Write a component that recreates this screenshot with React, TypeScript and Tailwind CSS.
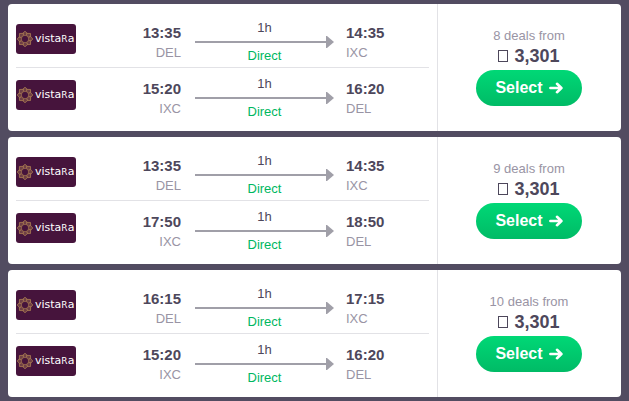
type Leg = { depart: string; from: string; arrive: string; to: string };
type Deal = { count: number; legs: Leg[] };

const deals: Deal[] = [
  {
    count: 8,
    legs: [
      { depart: "13:35", from: "DEL", arrive: "14:35", to: "IXC" },
      { depart: "15:20", from: "IXC", arrive: "16:20", to: "DEL" },
    ],
  },
  {
    count: 9,
    legs: [
      { depart: "13:35", from: "DEL", arrive: "14:35", to: "IXC" },
      { depart: "17:50", from: "IXC", arrive: "18:50", to: "DEL" },
    ],
  },
  {
    count: 10,
    legs: [
      { depart: "16:15", from: "DEL", arrive: "17:15", to: "IXC" },
      { depart: "15:20", from: "IXC", arrive: "16:20", to: "DEL" },
    ],
  },
];

const petals = [0, 45, 90, 135, 180, 225, 270, 315];

function AirlineLogo() {
  return (
    <div className="mt-3 flex h-[30px] w-[60px] shrink-0 items-center gap-[2px] rounded-[3px] bg-[#46143c] pl-px text-white">
      <svg className="size-4 shrink-0" viewBox="-8 -8 16 16" fill="#6f3f45" stroke="#a67850" strokeWidth="0.8" aria-hidden="true">
        {petals.map((angle) => (
          <path key={angle} d="M0 -7.8 L3 -5 L0 -2.9 L-3 -5 Z" transform={`rotate(${angle})`} />
        ))}
        <circle r="2.9" fill="#46143c" stroke="none" />
      </svg>
      <span className="font-['DejaVu_Sans',sans-serif] text-[11px] leading-3">
        vista<span className="text-[9px]">R</span>a
      </span>
    </div>
  );
}

function FlightLeg({ leg }: { leg: Leg }) {
  return (
    <div className="flex h-14 items-start border-b border-[#e2e2e6] last:border-b-0">
      <AirlineLogo />
      <div className="w-[105px] shrink-0 pt-[11px] text-right">
        <div className="text-[15px] leading-5 font-bold">{leg.depart}</div>
        <div className="text-[13px] leading-5 text-[#9994a4]">{leg.from}</div>
      </div>
      <div className="mr-3 ml-[14px] flex-1 pt-2 text-center text-[13px] leading-4">
        <div>1h</div>
        <div className="flex h-3 items-center">
          <div className="h-[2px] flex-1 bg-[#a09fa8]" />
          <svg className="h-3 w-2" viewBox="0 0 8 12" aria-hidden="true">
            <path d="M0 0 H1 L8 6 L1 12 H0 Z" fill="#a09fa8" />
          </svg>
        </div>
        <div className="text-[#00b75f]">Direct</div>
      </div>
      <div className="w-[83px] shrink-0 pt-[11px]">
        <div className="text-[15px] leading-5 font-bold">{leg.arrive}</div>
        <div className="text-[13px] leading-5 text-[#9994a4]">{leg.to}</div>
      </div>
    </div>
  );
}

function DealCard({ deal }: { deal: Deal }) {
  return (
    <article className="flex rounded bg-white">
      <div className="flex-1 px-2 pt-2 pb-[7px]">
        {deal.legs.map((leg) => (
          <FlightLeg key={leg.depart} leg={leg} />
        ))}
      </div>
      <div className="flex w-[184px] shrink-0 flex-col items-center border-l border-[#e2e2e6] pt-[22px] pr-px">
        <div className="text-[13px] leading-5 text-[#9994a4]">{deal.count} deals from</div>
        <div className="mb-1 flex items-center gap-[6px] text-[18px] leading-5 font-bold">
          <span className="h-3 w-[10px] border border-current" role="img" aria-label="Rupees" />
          3,301
        </div>
        <button
          type="button"
          className="flex h-9 w-[106px] items-center justify-center gap-[6px] rounded-full bg-linear-to-b from-[#00d876] to-[#00bb66] text-base leading-5 font-bold text-white"
        >
          Select
          <svg className="h-3 w-[14px]" viewBox="0 0 14 12" fill="none" stroke="currentColor" strokeWidth="2.6" strokeLinecap="round" strokeLinejoin="round" aria-hidden="true">
            <path d="M1.4 6 H12 M8 1.8 L12.4 6 L8 10.2" />
          </svg>
        </button>
      </div>
    </article>
  );
}

export default function App() {
  return (
    <main className="flex min-h-screen flex-col gap-[6px] bg-[#524c61] px-2 py-1 font-['Liberation_Sans',Arial,sans-serif] text-[#4d475b]">
      {deals.map((deal) => (
        <DealCard key={deal.count} deal={deal} />
      ))}
    </main>
  );
}
